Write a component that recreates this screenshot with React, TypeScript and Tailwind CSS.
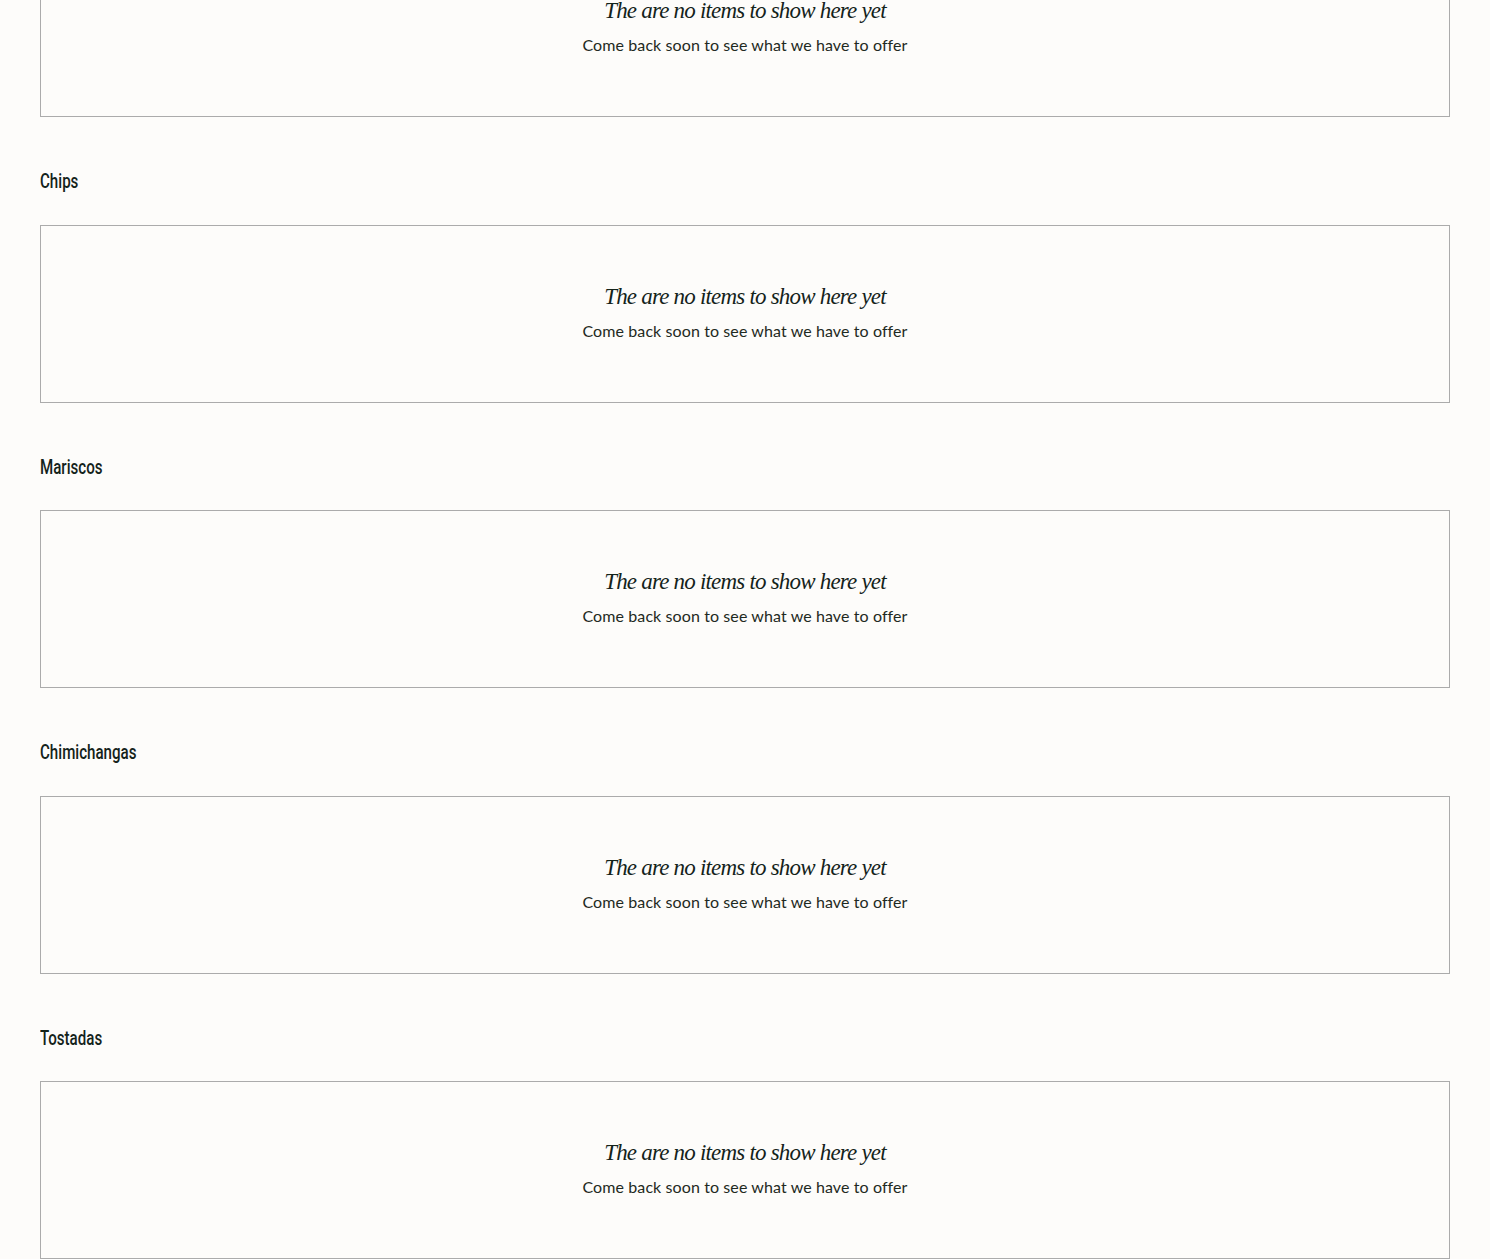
import React from 'react';

const categories = ['Chips', 'Mariscos', 'Chimichangas', 'Tostadas'];

const EmptyBox: React.FC = () => (
  <div className="h-[178px] border border-[#ababab] bg-[#fdfcfa] flex flex-col items-center justify-center pb-[3px]">
    <h3
      className="text-[23px] leading-[26px] italic text-[#14231a] tracking-[-0.8px]"
      style={{ fontFamily: '"Liberation Serif", "DejaVu Serif", serif' }}
    >
      The are no items to show here yet
    </h3>
    <p
      className="mt-[11px] text-[16px] leading-[20px] text-[#1f2a22] tracking-[0.1px]"
      style={{ fontFamily: 'Lato, "Noto Sans", sans-serif' }}
    >
      Come back soon to see what we have to offer
    </p>
  </div>
);

export default function App() {
  return (
    <div className="min-h-screen bg-[#fdfcfa] overflow-hidden">
      <div className="px-[40px] mt-[-61px] pb-[40px]">
        <EmptyBox />
        {categories.map((name) => (
          <section key={name}>
            <h2 className="mt-[52px] mb-[31.5px] h-[24px] leading-[24px]">
              <span
                className="inline-block origin-left scale-x-[0.72] text-[21px] font-medium text-[#14231a]"
                style={{ fontFamily: 'Roboto, "DejaVu Sans Condensed", sans-serif' }}
              >
                {name}
              </span>
            </h2>
            <EmptyBox />
          </section>
        ))}
      </div>
    </div>
  );
}
